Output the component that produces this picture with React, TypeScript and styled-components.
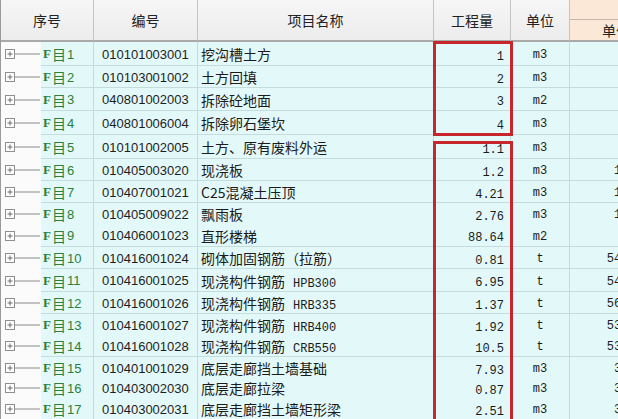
import React from "react";
import styled, { createGlobalStyle } from "styled-components";

const GlobalStyle = createGlobalStyle`
  html, body { margin: 0; padding: 0; background: #ffffff; overflow: hidden; }
  body { font-family: "Noto Sans CJK SC", "Liberation Sans", sans-serif; color: #1b1b1b; }
`;

const COLS = "93px 104px 236px 77px 59px 84px";
const CJK = `"Noto Sans CJK SC", "Liberation Sans", sans-serif`;
const MONO = `"Liberation Mono", "Noto Sans CJK SC", monospace`;

const Wrapper = styled.div`
  position: relative;
  width: 653px;
  height: 419px;
  overflow: hidden;
  border-left: 1px solid #9a9a9a;
`;

const HeaderRow = styled.div`
  display: grid;
  grid-template-columns: ${COLS};
  height: 42px;
`;

const HeaderCell = styled.div`
  display: flex;
  align-items: center;
  justify-content: center;
  background: linear-gradient(#f6f6f6, #ececec);
  border-right: 1px solid #c4c4c4;
  border-bottom: 2px solid #a9a9a9;
  font-family: ${CJK};
  font-size: 14px;
  color: #222;
`;

const GroupHeader = styled.div`
  display: grid;
  grid-template-rows: 20px 1fr;
  background: #fbe8d7;
  border-bottom: 2px solid #a9a9a9;
`;

const GroupTop = styled.div`
  border-bottom: 1px solid #c8b8aa;
`;

const SubHeader = styled.div`
  display: flex;
  align-items: center;
  padding-left: 32px;
  font-family: ${CJK};
  font-size: 14px;
  color: #222;
  white-space: nowrap;
`;

const Row = styled.div<{ $h: number }>`
  display: grid;
  grid-template-columns: ${COLS};
  height: ${(p) => p.$h}px;
`;

const TreeCell = styled.div`
  display: flex;
  background: #fbfbfb;
`;

const TreeStub = styled.div`
  width: 40px;
  display: flex;
  align-items: center;
`;

const Label = styled.div`
  flex: 1;
  display: flex;
  align-items: center;
  padding: 1px 0 0 2px;
  background: #e3f9f9;
  border-bottom: 1px solid #c5dcdc;
  border-right: 1px solid #c5dcdc;
  color: #2a8038;
  font-family: ${CJK};
  font-size: 14px;
`;

const LabelF = styled.span`
  font-family: "Liberation Serif", serif;
  font-weight: bold;
  font-size: 13px;
  margin-right: 1px;
`;

const LabelNum = styled.span`
  font-family: "Liberation Sans", sans-serif;
  font-size: 13px;
  margin-left: 1px;
`;

const Cell = styled.div<{ $align?: "left" | "right" | "center"; $pad?: string }>`
  display: flex;
  align-items: center;
  justify-content: ${(p) =>
    p.$align === "right" ? "flex-end" : p.$align === "center" ? "center" : "flex-start"};
  padding: ${(p) => p.$pad || "1px 0 0 0"};
  background: #e3f9f9;
  border-bottom: 1px solid #c5dcdc;
  border-right: 1px solid #c5dcdc;
  white-space: nowrap;
  overflow: hidden;
`;

const CodeText = styled.span`
  font-family: "Liberation Sans", sans-serif;
  font-size: 13px;
  color: #1e1e1e;
`;

const NameText = styled.span`
  font-family: ${CJK};
  font-size: 14px;
  color: #1b1b1b;
`;

const Latin = styled.span`
  font-family: "Liberation Mono", monospace;
  font-size: 12px;
  margin-left: 8px;
`;

const MonoText = styled.span`
  font-family: ${MONO};
  font-size: 12px;
  line-height: 12px;
  color: #1b1b1b;
`;

const RedBox = styled.div<{ $top: number; $height: number }>`
  position: absolute;
  left: 432px;
  top: ${(p) => p.$top}px;
  width: 80px;
  height: ${(p) => p.$height}px;
  box-sizing: border-box;
  border: 3.5px solid #c6262c;
  pointer-events: none;
`;

const TreeIcon = () => (
  <svg width="40" height="12" viewBox="0 0 40 12">
    <rect x="4.5" y="1.5" width="9" height="9" fill="#ffffff" stroke="#8e8e8e" />
    <line x1="6.5" y1="6" x2="11.5" y2="6" stroke="#6a6a6a" />
    <line x1="9" y1="3.5" x2="9" y2="8.5" stroke="#6a6a6a" />
    <line x1="14" y1="6" x2="39" y2="6" stroke="#8a8a8a" />
  </svg>
);

type Item = {
  code: string;
  name: string;
  spec?: string;
  qty: string;
  unit: string;
  price: string;
  h: number;
};

const items: Item[] = [
  { code: "010101003001", name: "挖沟槽土方", qty: "1", unit: "m3", price: "", h: 24 },
  { code: "010103001002", name: "土方回填", qty: "2", unit: "m3", price: "", h: 22 },
  { code: "040801002003", name: "拆除砼地面", qty: "3", unit: "m2", price: "", h: 23 },
  { code: "040801006004", name: "拆除卵石堡坎", qty: "4", unit: "m3", price: "", h: 24 },
  { code: "010101002005", name: "土方、原有废料外运", qty: "1.1", unit: "m3", price: "", h: 24 },
  { code: "010405003020", name: "现浇板", qty: "1.2", unit: "m3", price: "12.35", h: 22 },
  { code: "010407001021", name: "C25混凝土压顶", qty: "4.21", unit: "m3", price: "14.82", h: 22 },
  { code: "010405009022", name: "飘雨板", qty: "2.76", unit: "m3", price: "13.06", h: 21 },
  { code: "010406001023", name: "直形楼梯", qty: "88.64", unit: "m2", price: "", h: 23 },
  { code: "010416001024", name: "砌体加固钢筋（拉筋）", qty: "0.81", unit: "t", price: "541.26", h: 22 },
  { code: "010416001025", name: "现浇构件钢筋", spec: "HPB300", qty: "6.95", unit: "t", price: "541.26", h: 23 },
  { code: "010416001026", name: "现浇构件钢筋", spec: "HRB335", qty: "1.37", unit: "t", price: "560.12", h: 22 },
  { code: "010416001027", name: "现浇构件钢筋", spec: "HRB400", qty: "1.92", unit: "t", price: "531.17", h: 21 },
  { code: "010416001028", name: "现浇构件钢筋", spec: "CRB550", qty: "10.5", unit: "t", price: "531.17", h: 22 },
  { code: "010401001029", name: "底层走廊挡土墙基础", qty: "7.93", unit: "m3", price: "31.24", h: 20 },
  { code: "010403002030", name: "底层走廊拉梁", qty: "0.87", unit: "m3", price: "31.24", h: 21 },
  { code: "010403002031", name: "底层走廊挡土墙矩形梁", qty: "2.51", unit: "m3", price: "31.24", h: 21 },
];

export default function App() {
  return (
    <>
      <GlobalStyle />
      <Wrapper>
        <HeaderRow>
          <HeaderCell>序号</HeaderCell>
          <HeaderCell>编号</HeaderCell>
          <HeaderCell>项目名称</HeaderCell>
          <HeaderCell>工程量</HeaderCell>
          <HeaderCell>单位</HeaderCell>
          <GroupHeader>
            <GroupTop />
            <SubHeader>单价</SubHeader>
          </GroupHeader>
        </HeaderRow>
        {items.map((it, i) => (
          <Row key={it.code} $h={it.h}>
            <TreeCell>
              <TreeStub>
                <TreeIcon />
              </TreeStub>
              <Label>
                <LabelF>F</LabelF>目<LabelNum>{i + 1}</LabelNum>
              </Label>
            </TreeCell>
            <Cell $pad="1px 0 0 8px">
              <CodeText>{it.code}</CodeText>
            </Cell>
            <Cell $pad="1px 0 0 3px">
              <NameText>
                {it.name}
                {it.spec && <Latin>{it.spec}</Latin>}
              </NameText>
            </Cell>
            <Cell $align="right" $pad="6px 6px 0 0">
              <MonoText>{it.qty}</MonoText>
            </Cell>
            <Cell $align="center" $pad="3px 0 0 0">
              <MonoText>{it.unit}</MonoText>
            </Cell>
            <Cell $align="right" $pad="3px 3px 0 0">
              <MonoText>{it.price}</MonoText>
            </Cell>
          </Row>
        ))}
        <RedBox $top={41} $height={95} />
        <RedBox $top={141} $height={300} />
      </Wrapper>
    </>
  );
}
